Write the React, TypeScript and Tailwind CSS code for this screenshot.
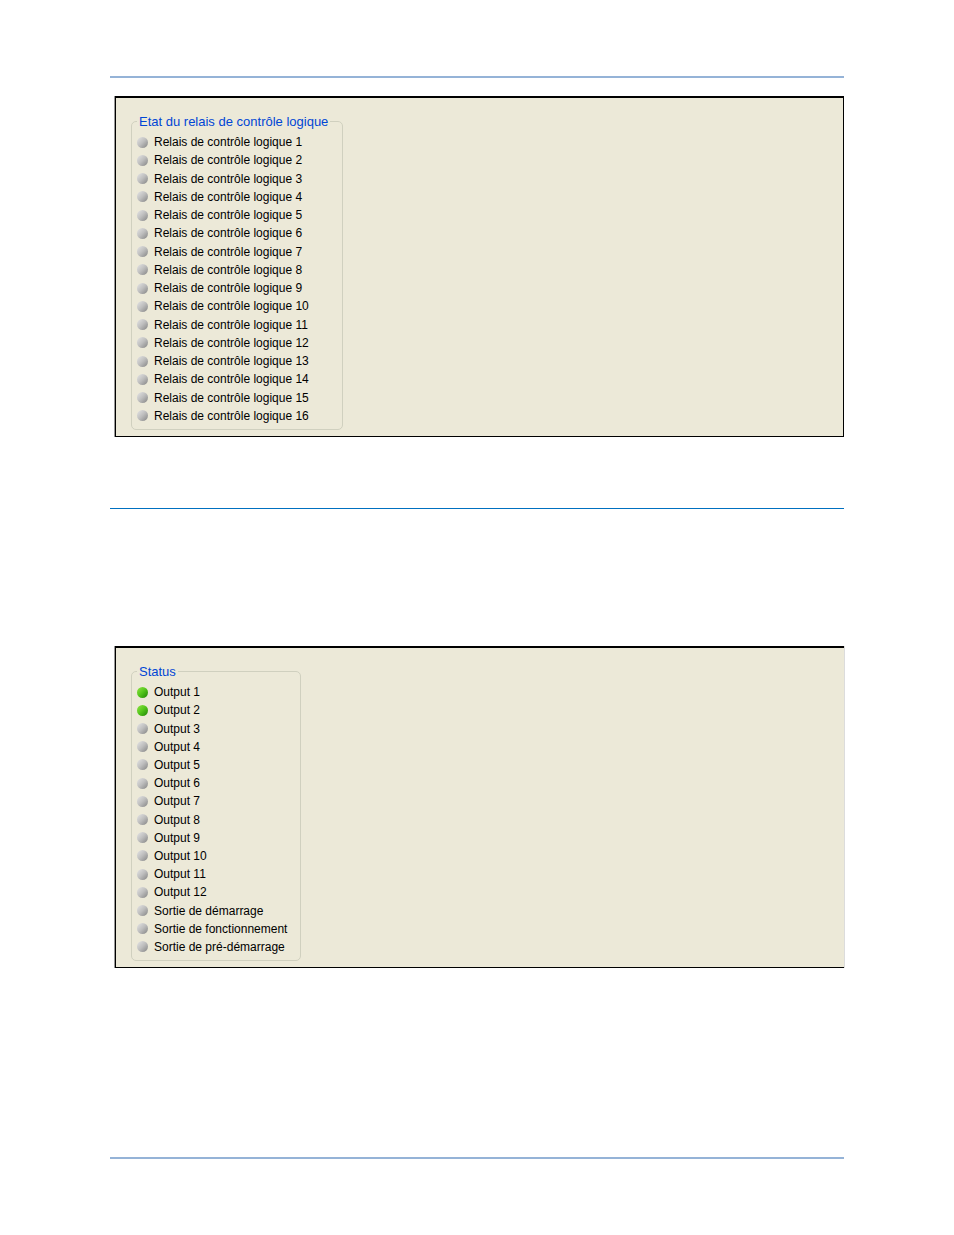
type Indicator = { label: string; on?: boolean };

const relays: Indicator[] = Array.from({ length: 16 }, (_, i) => ({
  label: `Relais de contrôle logique ${i + 1}`,
}));

const outputs: Indicator[] = [
  ...Array.from({ length: 12 }, (_, i) => ({ label: `Output ${i + 1}`, on: i < 2 })),
  { label: "Sortie de démarrage" },
  { label: "Sortie de fonctionnement" },
  { label: "Sortie de pré-démarrage" },
];

function Led({ on }: { on?: boolean }) {
  return (
    <span
      className={`size-[11px] shrink-0 rounded-full bg-linear-to-br ${
        on ? "from-[#8ee640] via-[#52c41a] to-[#1c8406]" : "from-[#e6e6e6] via-[#bdbdbd] to-[#848484]"
      }`}
    />
  );
}

function StatusGroup({
  title,
  items,
  className,
  listClassName,
}: {
  title: string;
  items: Indicator[];
  className: string;
  listClassName: string;
}) {
  return (
    <fieldset className={`rounded-[5px] border border-[#d0d0bf] pb-1 pl-[5px] ${className}`}>
      <legend className="px-[2px] pt-[2px] text-[13px] leading-4 text-[#0046d5]">{title}</legend>
      <ul className={`mt-[3px] flex flex-col text-[12px] leading-4 text-black ${listClassName}`}>
        {items.map((item) => (
          <li key={item.label} className="flex flex-1 items-center gap-[6px] whitespace-nowrap">
            <Led on={item.on} />
            {item.label}
          </li>
        ))}
      </ul>
    </fieldset>
  );
}

export default function App() {
  return (
    <div className="flex min-h-screen flex-col bg-white px-[110px] pt-[76px] pb-[76px] font-['Liberation_Sans',Arial,sans-serif]">
      <header className="h-[2px] bg-[#95b3d7]" />
      <main className="flex grow flex-col">
        <section className="mt-[18px] ml-1 border-l border-[#999999]">
          <div className="border border-t-2 border-black bg-[#ece9d8] pt-[14px] pr-4 pb-[6px] pl-[15px]">
            <StatusGroup
              title="Etat du relais de contrôle logique"
              items={relays}
              className="w-[212px]"
              listClassName="h-[292px]"
            />
          </div>
        </section>
        <hr className="mt-[71px] border-t border-[#0070c0]" />
        <section className="mt-[137px] -mr-px ml-1 border-x border-l-[#999999] border-r-[#dcdcdc]">
          <div className="border-t-2 border-b border-l border-black bg-[#ece9d8] pt-[14px] pr-4 pb-[6px] pl-[15px]">
            <StatusGroup title="Status" items={outputs} className="w-[170px]" listClassName="h-[273px]" />
          </div>
        </section>
      </main>
      <footer className="h-[2px] bg-[#95b3d7]" />
    </div>
  );
}
